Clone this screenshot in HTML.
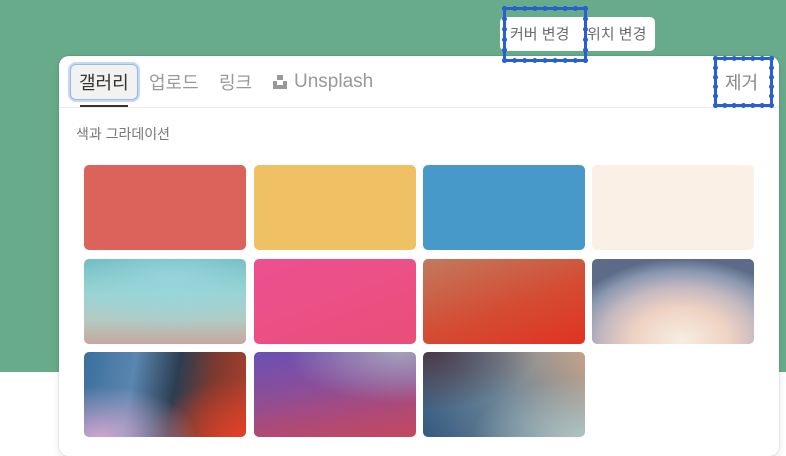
<!DOCTYPE html>
<html><head><meta charset="utf-8"><style>
*{margin:0;padding:0;box-sizing:border-box}
body{width:786px;height:450px;overflow:hidden;position:relative;background:#fff;font-family:"Liberation Sans","Noto Sans CJK KR",sans-serif}
.green{position:absolute;left:0;top:0;width:786px;height:372px;background:#68ab8b}
.btns{position:absolute;left:500px;top:17px;width:155px;height:34px;background:#fff;border-radius:5px}
.btns span{position:absolute;top:6px;font-size:15px;color:#6b6b6b}
.scr{position:absolute;border:5px dotted #2260d4;outline:3px solid #2a5fd0;outline-offset:-4px}
.panel{position:absolute;left:59px;top:56px;width:720px;height:400px;background:#fff;border-radius:10px;box-shadow:0 0 0 1px rgba(0,0,0,.05),0 3px 8px rgba(0,0,0,.1)}
.tab{position:absolute;top:13px;font-size:18px;color:#999}
.sel{position:absolute;left:11px;top:8px;width:68px;height:36px;border-radius:6px;background:#f2f2f1;border:1px solid #9bb9ee;box-shadow:0 0 0 2px #c6d8f7}
.line{position:absolute;left:0;top:51px;width:720px;height:1px;background:#ececeb}
.ul{position:absolute;left:21px;top:49px;width:48px;height:2px;background:#333}
.sw{position:absolute;width:162px;height:85px;border-radius:5px}
</style></head><body>
<div class="green"></div>
<div class="btns"><span style="left:10px">커버 변경</span><span style="left:87px">위치 변경</span></div>
<div class="panel">
<div class="sel"></div>
<div class="tab" style="left:20px;color:#333">갤러리</div>
<div class="tab" style="left:90px">업로드</div>
<div class="tab" style="left:160px">링크</div>
<svg style="position:absolute;left:214px;top:19px" width="14" height="14"><rect x="4" y="0" width="6" height="5" fill="#999"/><rect x="0" y="6" width="14" height="8" fill="#999"/><rect x="4" y="6" width="6" height="4" fill="#fff"/></svg>
<div class="tab" style="left:235px;top:15px;font-size:19px">Unsplash</div>
<div class="tab" style="left:666px;top:13px;color:#888">제거</div>
<div class="line"></div><div class="ul"></div>
<div style="position:absolute;left:17px;top:68px;font-size:14px;color:#777">색과 그라데이션</div>
</div>
<div class="scr" style="left:502px;top:6px;width:86px;height:57px"></div>
<div class="scr" style="left:713px;top:56px;width:61px;height:52px"></div>
<div class="sw" style="left:84px;top:165px;background:#dc625c"></div>
<div class="sw" style="left:254px;top:165px;background:#f0c064"></div>
<div class="sw" style="left:423px;top:165px;background:#4799ca"></div>
<div class="sw" style="left:592px;top:165px;background:#fbf0e6"></div>
<div class="sw" style="left:84px;top:259px;background:radial-gradient(ellipse 70% 60% at 55% 25%,rgba(150,215,220,.9),rgba(150,215,220,0)),linear-gradient(180deg,#6cb8be 0%,#9ad3d3 40%,#b2cbc4 70%,#c6a8a0 100%)"></div>
<div class="sw" style="left:254px;top:259px;background:linear-gradient(160deg,#ec5190,#ea4e7a)"></div>
<div class="sw" style="left:423px;top:259px;background:linear-gradient(160deg,#c17a5e,#d44c33 55%,#e03322)"></div>
<div class="sw" style="left:592px;top:259px;background:radial-gradient(ellipse 75% 95% at 55% 95%,#f7ede2 0%,#eed2c2 40%,#c4b8c0 65%,#8a98b0 85%,#5c6c88 100%),#5c6c88"></div>
<div class="sw" style="left:84px;top:352px;background:radial-gradient(ellipse 60% 60% at 10% 100%,rgba(220,170,210,.9),rgba(200,170,210,0)),radial-gradient(ellipse 60% 70% at 100% 100%,rgba(225,65,40,1),rgba(180,60,40,0)),linear-gradient(100deg,#3a6f9c 0%,#5a86b0 30%,#2c3e52 55%,#7a3a30 75%,#b0402c 100%)"></div>
<div class="sw" style="left:254px;top:352px;background:radial-gradient(ellipse 70% 60% at 90% 0%,rgba(165,160,185,1),rgba(165,160,185,0)),linear-gradient(170deg,#6a50b5 0%,#8a4e9a 40%,#ad4a78 70%,#c4485e 100%)"></div>
<div class="sw" style="left:423px;top:352px;background:radial-gradient(ellipse 70% 70% at 0% 0%,rgba(75,55,70,1),rgba(75,55,70,0)),radial-gradient(ellipse 70% 70% at 100% 100%,rgba(175,195,195,1),rgba(175,195,195,0)),linear-gradient(55deg,#345a80 0%,#6f8798 50%,#c4a28a 100%)"></div>
</body></html>
